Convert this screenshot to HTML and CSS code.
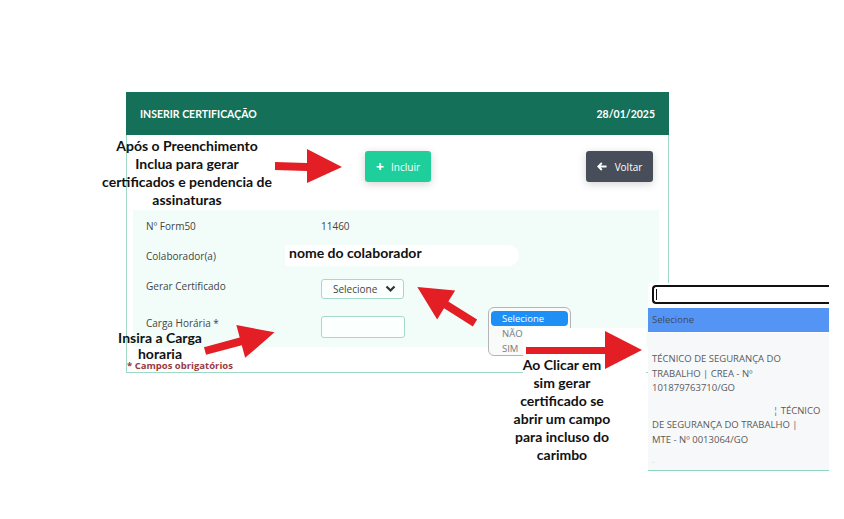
FILE: index.html
```html
<!DOCTYPE html>
<html lang="pt-BR">
<head>
<meta charset="utf-8">
<title>Inserir Certificação</title>
<link rel="stylesheet" href="styles.css">
</head>
<body>
<main class="page">
  <section class="card">
    <header class="card__head">
      <span>INSERIR CERTIFICAÇÃO</span>
      <span>28/01/2025</span>
    </header>
    <div class="card__body">
      <div class="actions">
        <button class="btn btn--add"><span class="btn__icon">+</span>Incluir</button>
        <button class="btn btn--back">
          <svg class="btn__svg" width="10" height="9" viewBox="0 0 10 9"><path d="M9.5 4.5 H1.8 M4.8 1 L1.3 4.5 L4.8 8" fill="none" stroke="#fff" stroke-width="1.8"/></svg>Voltar</button>
      </div>
      <div class="form">
        <div class="row row--a">
          <span class="row__label">Nº Form50</span>
          <span class="row__value">11460</span>
        </div>
        <div class="row row--a">
          <span class="row__label">Colaborador(a)</span>
          <span class="row__value"></span>
        </div>
        <div class="row row--b">
          <span class="row__label">Gerar Certificado</span>
          <span class="select">Selecione
            <svg class="select__chev" width="11" height="8" viewBox="0 0 11 8"><path d="M1.5 1.5 L5.5 5.5 L9.5 1.5" fill="none" stroke="#333" stroke-width="2.2"/></svg>
          </span>
        </div>
        <div class="row row--c">
          <span class="row__label">Carga Horária *</span>
          <span class="input"></span>
        </div>
      </div>
      <p class="required">* Campos obrigatórios</p>
    </div>
  </section>
</main>

<div class="blob"></div>
<p class="note note--incluir">Após o Preenchimento<br>Inclua para gerar<br>certificados e pendencia de<br>assinaturas</p>
<p class="note note--nome">nome do colaborador</p>
<p class="note note--carga">Insira a Carga<br>horaria</p>

<div class="popup">
  <div class="popup__opt popup__opt--on">Selecione</div>
  <div class="popup__opt">NÃO</div>
  <div class="popup__opt">SIM</div>
</div>

<div class="callout">
  <p class="note note--clicar">Ao Clicar em<br>sim gerar<br>certificado se<br>abrir um campo<br>para incluso do<br>carimbo</p>
</div>

<aside class="panel">
  <div class="panel__search"><span class="panel__caret"></span></div>
  <div class="panel__sel">Selecione</div>
  <div class="panel__list">
    <p class="panel__opt">TÉCNICO DE SEGURANÇA DO<br>TRABALHO | CREA - Nº<br>101879763710/GO</p>
    <p class="panel__opt"><span class="panel__indent">¦ TÉCNICO</span><br>DE SEGURANÇA DO TRABALHO |<br>MTE - Nº 0013064/GO</p>
    <p class="panel__dot">.</p>
  </div>
</aside>

<svg class="arrows" width="844" height="519" viewBox="0 0 844 519">
  <polygon fill="#e31e24" points="275,162 307,163 307,149 342,167 307,183 307,171 275,170"/>
  <g transform="translate(475 323) rotate(212)">
    <polygon fill="#e31e24" points="0,-4 34,-4 34,-17 68,0 34,17 34,4 0,4"/>
  </g>
  <g transform="translate(205 351) rotate(-15)">
    <polygon fill="#e31e24" points="0,-4 37,-4 37,-17 72,0 37,17 37,4 0,4"/>
  </g>
  <polygon fill="#e31e24" points="526,347 605,347 605,331 642,350 605,369 605,354 526,354"/>
</svg>
</body>
</html>
```

FILE: styles.css
```css
html, body {
  margin: 0;
  padding: 0;
  background: #ffffff;
  width: 844px;
  height: 519px;
  overflow: hidden;
  font-family: "Open Sans", "Noto Sans", sans-serif;
}

.page {
  padding: 92px 0 0 126px;
}

.card {
  width: 543px;
}

.card__head {
  height: 43px;
  background: #15705a;
  color: #ffffff;
  display: flex;
  justify-content: space-between;
  align-items: center;
  padding: 0 14px;
  font-family: Lato, sans-serif;
  font-weight: 700;
  font-size: 10.5px;
  box-sizing: border-box;
}

.card__body {
  border-left: 1px solid #9fd8c5;
  border-right: 1px solid #9fd8c5;
  border-bottom: 1px solid #9fd8c5;
}

.actions {
  height: 75px;
  display: flex;
  align-items: flex-start;
  padding: 16px 15px 0 238px;
  box-sizing: border-box;
}

.btn {
  height: 31px;
  border: none;
  border-radius: 3px;
  color: #ffffff;
  font-family: "Open Sans", sans-serif;
  font-size: 10px;
  display: flex;
  align-items: center;
  justify-content: center;
  gap: 7px;
  padding: 0;
  box-shadow: 0 2px 8px rgba(0, 0, 0, 0.18);
}

.btn__icon {
  font-size: 14px;
  font-weight: 700;
  line-height: 1;
}

.btn__svg {
  display: block;
}

.btn--add {
  width: 66px;
  background: #1ecf9b;
}

.btn--back {
  width: 67px;
  margin-left: auto;
  gap: 8px;
  background: #474e59;
}

.form {
  margin: 0 9px 0 6px;
  background: #f2fdf9;
  padding-top: 6px;
  height: 137px;
  box-sizing: border-box;
}

.row {
  display: flex;
  align-items: flex-start;
  padding-left: 13px;
  font-size: 10px;
  color: #444;
}

.row--a { height: 30px; }
.row--b { height: 37px; }
.row--c { height: 34px; }

.row__label {
  width: 175px;
  line-height: 20px;
}

.row__value {
  line-height: 20px;
}

.select {
  margin-top: 3px;
  width: 83px;
  height: 20px;
  box-sizing: border-box;
  border: 1px solid #a6d9c9;
  border-radius: 3px;
  background: #fbfffd;
  display: flex;
  align-items: center;
  padding-left: 11px;
  gap: 8px;
  color: #444;
}

.select__chev {
  display: block;
}

.input {
  margin-top: 3px;
  width: 84px;
  height: 22px;
  box-sizing: border-box;
  border: 1px solid #a6d9c9;
  border-radius: 3px;
  background: #fbfffd;
}

.required {
  margin: 0;
  padding: 12px 0 0 0;
  height: 25px;
  box-sizing: border-box;
  line-height: 14px;
  font-size: 9.5px;
  font-weight: 700;
  color: #9a3a3e;
}

/* annotations (overlay) */
.note {
  position: absolute;
  margin: 0;
  font-family: Lato, sans-serif;
  font-weight: 700;
  font-size: 14px;
  line-height: 18px;
  color: #111;
  text-align: center;
  white-space: nowrap;
}

.note--incluir {
  left: 87px;
  top: 137px;
  width: 200px;
}

.note--nome {
  left: 289px;
  top: 244px;
}

.note--carga {
  left: 100px;
  top: 330px;
  width: 120px;
  line-height: 16px;
}

.blob {
  position: absolute;
  left: 285px;
  top: 245px;
  width: 234px;
  height: 21px;
  background: #ffffff;
  border-radius: 0 14px 14px 0;
}

.popup {
  position: absolute;
  left: 488px;
  top: 307px;
  width: 83px;
  height: 49px;
  box-sizing: border-box;
  border: 1px solid #b5b5b5;
  border-radius: 6px;
  background: #f8fbfa;
  padding: 3px 2px 0;
  font-family: "Open Sans", sans-serif;
  font-size: 9.5px;
  color: #7b7b7b;
}

.popup__opt {
  height: 15px;
  line-height: 15px;
  padding-left: 11px;
}

.popup__opt--on {
  background: #1e8ff5;
  color: #ffffff;
  border-radius: 4px;
}

.callout {
  position: absolute;
  left: 523px;
  top: 328px;
  width: 123px;
  height: 144px;
  background: #ffffff;
}

.note--clicar {
  left: -21px;
  top: 28px;
  width: 120px;
}

.panel {
  position: absolute;
  left: 648px;
  top: 283px;
  width: 181px;
  height: 187px;
  background: #ffffff;
  border-bottom: 1px solid #8fd6c0;
  font-family: "Open Sans", sans-serif;
  font-size: 9.5px;
  color: #5a5a5a;
}

.panel__search {
  margin: 2px 0 0 4px;
  height: 19px;
  box-sizing: border-box;
  border: 2px solid #111;
  border-right: none;
  border-radius: 4px 0 0 4px;
  display: flex;
  align-items: center;
  padding-left: 2px;
}

.panel__caret {
  width: 1px;
  height: 11px;
  background: #111;
}

.panel__sel {
  margin-top: 4px;
  height: 24px;
  line-height: 24px;
  background: #5494f4;
  color: #3f4a5e;
  padding-left: 4px;
}

.panel__list {
  background: #f7f8fa;
  height: 137px;
  margin-top: 1px;
  padding: 19px 0 0 4px;
  box-sizing: border-box;
}

.panel__opt {
  margin: 0 0 8px;
  line-height: 14.5px;
}

.panel__indent {
  padding-left: 121px;
}

.panel__dot {
  margin: 0;
  line-height: 10px;
  color: #ccc;
}

.arrows {
  position: absolute;
  left: 0;
  top: 0;
  pointer-events: none;
}
```
